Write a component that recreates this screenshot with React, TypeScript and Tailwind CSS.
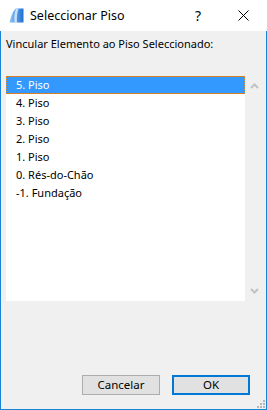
import React from "react";

const items = ["5. Piso", "4. Piso", "3. Piso", "2. Piso", "1. Piso", "0. Rés-do-Chão", "-1. Fundação"];

export default function App() {
  return (
    <div
      className="w-[267px] h-[410px] flex flex-col overflow-hidden text-black"
      style={{ fontFamily: '"Noto Sans", "Open Sans", sans-serif' }}
    >
      {/* Title bar */}
      <div className="h-[31px] bg-white flex items-center shrink-0">
        <div className="w-[30px] flex justify-center pl-[2px]">
          <svg width="15" height="15" viewBox="0 0 15 15">
            <defs>
              <linearGradient id="g1" x1="0" y1="0" x2="1" y2="0">
                <stop offset="0" stopColor="#8fc4f5" />
                <stop offset="1" stopColor="#1f6fd1" />
              </linearGradient>
            </defs>
            <path d="M0.5 14.5 C2 8 4 3 7 0.5 L14.5 0.5 L14.5 14.5 Z" fill="url(#g1)" />
            <path d="M7 0.5 L9.5 0.5 C8 5 7.5 10 8 14.5 L5.5 14.5 C5 9 5.5 4 7 0.5 Z" fill="#d8ecfd" opacity="0.85" />
          </svg>
        </div>
        <div className="text-[12.5px] leading-none pt-[1px]">Seleccionar Piso</div>
        <div className="flex-1" />
        <div className="text-[14px] leading-none w-[10px] mr-[33px] pt-[1px]">?</div>
        <svg width="11" height="11" viewBox="0 0 11 11" className="mr-[18px]">
          <path d="M0.5 0.5 L10.5 10.5 M10.5 0.5 L0.5 10.5" stroke="#000" strokeWidth="1" />
        </svg>
      </div>

      {/* Body */}
      <div className="flex-1 flex flex-col bg-[#f0f0f0] border-x border-b border-[#1883d7] pl-[5px] pr-[2px] pt-[5px] pb-[14px] relative">
        <div className="text-[11px] leading-[16px] h-[16px]">Vincular Elemento ao Piso Seleccionado:</div>

        <div className="mt-[24px] h-[225px] flex">
          <div className="w-[239px] bg-white pt-0">
            {items.map((it, i) => (
              <div
                key={it}
                className={
                  i === 0
                    ? "h-[18px] flex items-center pl-[10px] bg-[#3399ff] text-white outline outline-1 outline-dotted outline-offset-[-1px] outline-[#e0892a] text-[11px]"
                    : "h-[18px] flex items-center pl-[10px] text-[11px]"
                }
              >
                {it}
              </div>
            ))}
          </div>
          <div className="w-[18px] flex flex-col justify-between items-center py-[7px]">
            <svg width="9" height="6" viewBox="0 0 9 6">
              <path d="M1 5 L4.5 1.5 L8 5" stroke="#c2c2c2" strokeWidth="2" fill="none" />
            </svg>
            <svg width="9" height="6" viewBox="0 0 9 6">
              <path d="M1 1 L4.5 4.5 L8 1" stroke="#c2c2c2" strokeWidth="2" fill="none" />
            </svg>
          </div>
        </div>

        <div className="flex-1" />

        <div className="flex justify-end gap-[12px] pr-[14px]">
          <button className="w-[78px] h-[20px] bg-[#e1e1e1] border border-[#adadad] text-[11.5px] leading-none flex items-center justify-center">
            Cancelar
          </button>
          <button className="w-[78px] h-[20px] bg-[#e1e1e1] border-2 border-[#0078d7] text-[11.5px] leading-none flex items-center justify-center">
            OK
          </button>
        </div>

        <svg width="9" height="9" viewBox="0 0 9 9" className="absolute right-[1px] bottom-[1px]">
          <rect x="7" y="1" width="2" height="2" fill="#b8b8b8" />
          <rect x="4" y="4" width="2" height="2" fill="#b8b8b8" />
          <rect x="7" y="4" width="2" height="2" fill="#b8b8b8" />
          <rect x="1" y="7" width="2" height="2" fill="#b8b8b8" />
          <rect x="4" y="7" width="2" height="2" fill="#b8b8b8" />
          <rect x="7" y="7" width="2" height="2" fill="#b8b8b8" />
        </svg>
      </div>
    </div>
  );
}
